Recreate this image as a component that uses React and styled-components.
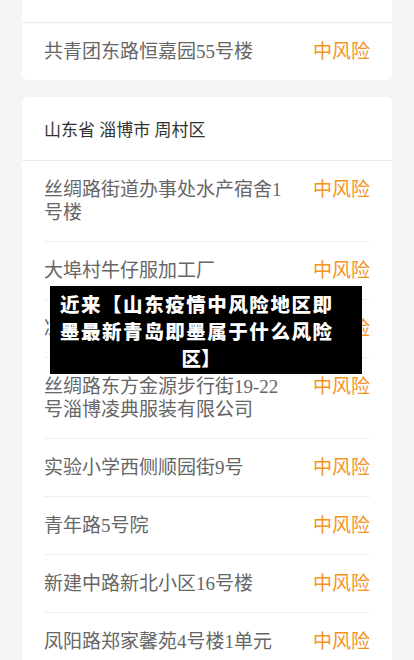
import styled, { createGlobalStyle } from "styled-components"

const GlobalStyle = createGlobalStyle`
  html, body {
    margin: 0;
    padding: 0;
    background: #f4f4f4;
  }
  body {
    font-family: "Liberation Serif", "Noto Sans CJK SC", serif;
  }
`

const areas = [
  {
    id: 1,
    head: null,
    rows: [{ name: "共青团东路恒嘉园55号楼", risk: "中风险" }],
  },
  {
    id: 2,
    head: "山东省 淄博市 周村区",
    rows: [
      { name: "丝绸路街道办事处水产宿舍1号楼", risk: "中风险" },
      { name: "大埠村牛仔服加工厂", risk: "中风险" },
      { name: "凉水井社区", risk: "中风险" },
      { name: "丝绸路东方金源步行街19-22号淄博凌典服装有限公司", risk: "中风险" },
      { name: "实验小学西侧顺园街9号", risk: "中风险" },
      { name: "青年路5号院", risk: "中风险" },
      { name: "新建中路新北小区16号楼", risk: "中风险" },
      { name: "凤阳路郑家馨苑4号楼1单元", risk: "中风险" },
    ],
  },
]

// title split the way the banner wraps it
const titleLines = ["近来【山东疫情中风险地区即", "墨最新青岛即墨属于什么风险", "区】"]

export default function App() {
  return (
    <Page>
      <GlobalStyle />
      {areas.map((area) => (
        <Card key={area.id}>
          <CardHead $empty={!area.head}>{area.head}</CardHead>
          <List>
            {area.rows.map((row, i) => (
              <Row key={i}>
                <Name>{row.name}</Name>
                <Risk>{row.risk}</Risk>
              </Row>
            ))}
          </List>
        </Card>
      ))}
      <Banner>
        {titleLines.map((line, i) => (
          <BannerLine key={i} $last={i === titleLines.length - 1}>
            {line}
          </BannerLine>
        ))}
      </Banner>
    </Page>
  )
}

const Page = styled.div`
  position: relative;
  display: flex;
  flex-direction: column;
  gap: 17px;
  padding: 0 22px;
  height: 660px;
  overflow: hidden;
`

const Card = styled.section`
  background: #fff;
  border-radius: 0 0 5px 5px;
  flex-shrink: 0;

  & + & {
    border-radius: 5px 5px 0 0;
  }
`

const CardHead = styled.div`
  height: ${(p) => (p.$empty ? "23px" : "64px")};
  box-sizing: border-box;
  padding: 0 22px;
  display: flex;
  align-items: center;
  border-bottom: 1px solid #ececec;
  font-size: 17px;
  color: #333;
`

const List = styled.div`
  padding: 0 22px;
`

const Row = styled.div`
  display: flex;
  align-items: flex-start;
  justify-content: space-between;
  padding: 17px 0;
  border-bottom: 1px solid #eeeeee;
  font-size: 19px;
  line-height: 23px;

  &:last-child {
    border-bottom: none;
  }
`

const Name = styled.span`
  flex: 1;
  color: #666;
  padding-right: 24px;
`

const Risk = styled.span`
  color: #f5931e;
  white-space: nowrap;
`

const Banner = styled.div`
  position: absolute;
  top: 286px;
  left: 50px;
  width: 312px;
  height: 88px;
  box-sizing: border-box;
  padding: 4px 20px 0 10px;
  background: #000;
  color: #fff;
  font-family: "Noto Sans CJK SC", sans-serif;
  font-weight: 900;
  font-size: 19.5px;
  line-height: 27px;
`

const BannerLine = styled.div`
  white-space: nowrap;
  margin-right: ${(p) => (p.$last ? "0" : "10px")};
  text-align: ${(p) => (p.$last ? "center" : "justify")};
  text-align-last: ${(p) => (p.$last ? "center" : "justify")};
`
